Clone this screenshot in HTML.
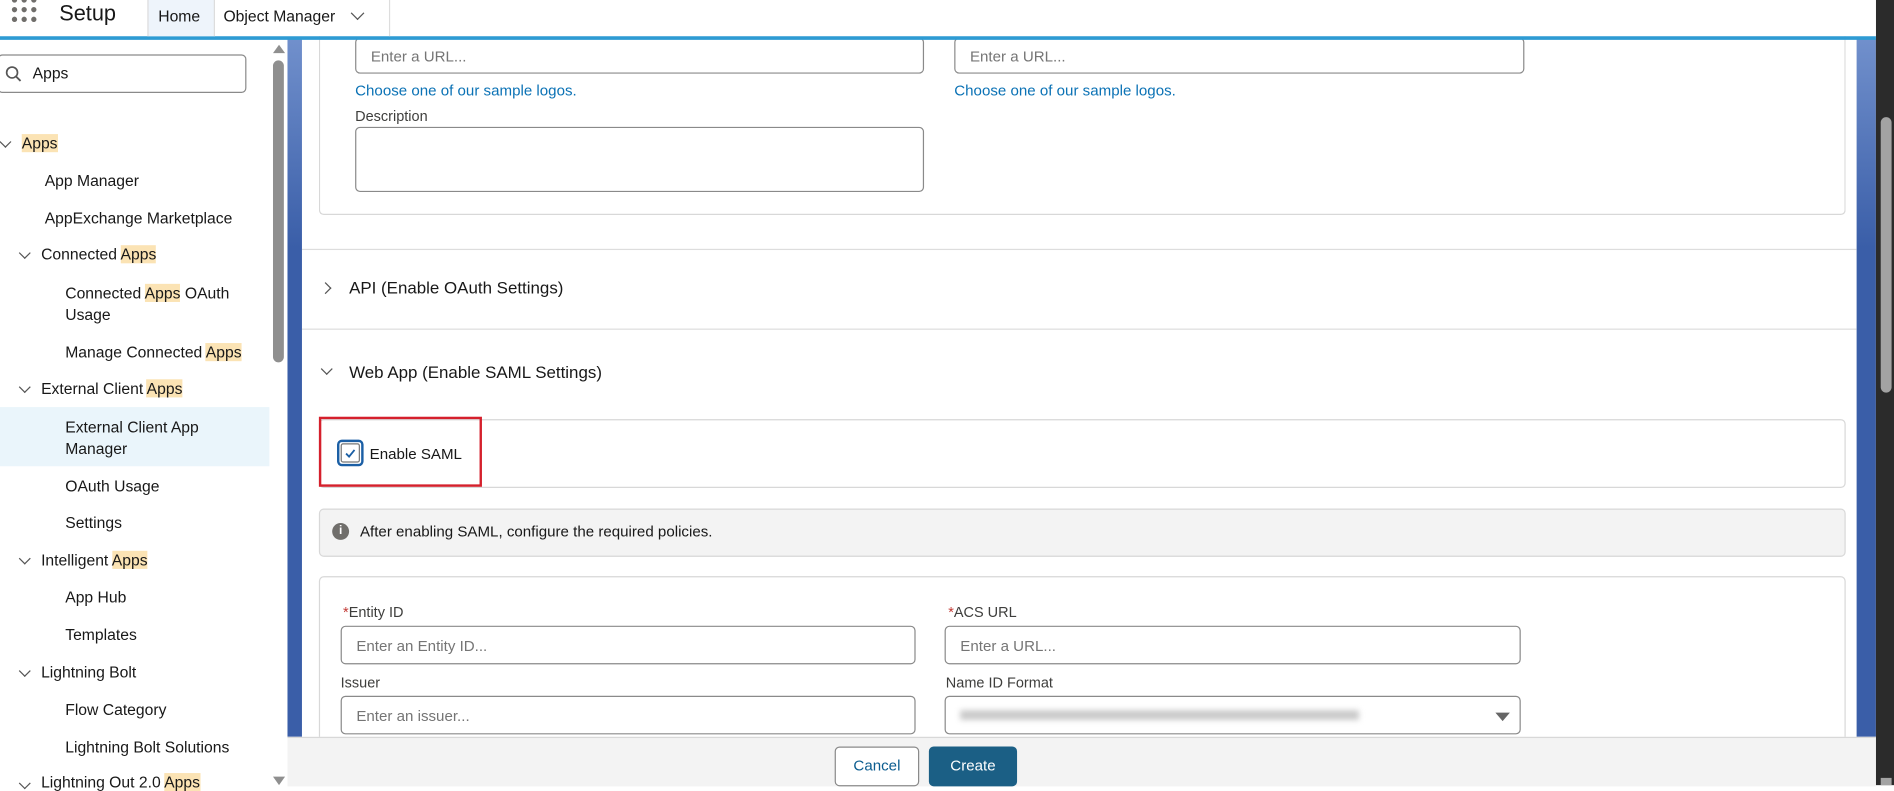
<!DOCTYPE html>
<html><head><meta charset="utf-8"><style>
html,body{margin:0;padding:0;width:1894px;height:785px;overflow:hidden;background:#fff}
#c{position:absolute;left:0;top:0;width:1568px;height:650px;transform:scale(1.20791);transform-origin:0 0;font-family:"Liberation Sans",sans-serif;color:#181818;font-size:12.5px}
.a{position:absolute}
.t{position:absolute;white-space:nowrap}
.hl{background:#fbe3b4}
.inp{position:absolute;border:1px solid #8a8a8a;border-radius:4px;background:#fff;box-sizing:border-box;color:#757575;font-size:12.5px;padding-left:12px;line-height:30px}
.lbl{position:absolute;font-size:12px;color:#3e3e3c;white-space:nowrap}
.card{position:absolute;border:1px solid #d8d8d8;border-radius:4px;background:#fff;box-sizing:border-box}
.side{font-size:13px;color:#181818}
.chev{position:absolute;width:6px;height:6px;border-right:1.3px solid #555;border-bottom:1.3px solid #555;transform:rotate(45deg)}
</style></head><body><div id="c">
<!-- sidebar -->
<div class="a" style="left:0;top:33px;width:238px;height:617px;background:#fff"></div>
<div class="a" style="left:226px;top:50px;width:9px;height:250px;background:#8f8f8f;border-radius:5px"></div>
<div class="a" style="left:226px;top:37px;width:0;height:0;border-left:5px solid transparent;border-right:5px solid transparent;border-bottom:7px solid #8f8f8f"></div>
<div class="a" style="left:226px;top:643px;width:0;height:0;border-left:5px solid transparent;border-right:5px solid transparent;border-top:7px solid #8f8f8f"></div>
<div class="a" style="left:-2px;top:45px;width:206px;height:32px;border:1px solid #8a8a8a;border-radius:4px;box-sizing:border-box"></div>
<svg class="a" style="left:4px;top:54px" width="14" height="14"><circle cx="6" cy="6" r="4.5" fill="none" stroke="#555" stroke-width="1.4"/><path d="M9.3 9.3L13 13" stroke="#555" stroke-width="1.5"/></svg>
<div class="t side" style="left:27px;top:53px">Apps</div>
<div class="a" style="left:0;top:337px;width:223px;height:49px;background:#eaf5fb"></div>
<div class="chev" style="left:1px;top:114px"></div>
<div class="t side" style="left:18px;top:111px"><span class="hl">Apps</span></div>
<div class="t side" style="left:37px;top:142px">App Manager</div>
<div class="t side" style="left:37px;top:173px">AppExchange Marketplace</div>
<div class="chev" style="left:17px;top:206px"></div>
<div class="t side" style="left:34px;top:203px">Connected <span class="hl">Apps</span></div>
<div class="t side" style="left:54px;top:235px">Connected <span class="hl">Apps</span> OAuth</div>
<div class="t side" style="left:54px;top:253px">Usage</div>
<div class="t side" style="left:54px;top:284px">Manage Connected <span class="hl">Apps</span></div>
<div class="chev" style="left:17px;top:317px"></div>
<div class="t side" style="left:34px;top:314px">External Client <span class="hl">Apps</span></div>
<div class="t side" style="left:54px;top:346px">External Client App</div>
<div class="t side" style="left:54px;top:364px">Manager</div>
<div class="t side" style="left:54px;top:395px">OAuth Usage</div>
<div class="t side" style="left:54px;top:425px">Settings</div>
<div class="chev" style="left:17px;top:459px"></div>
<div class="t side" style="left:34px;top:456px">Intelligent <span class="hl">Apps</span></div>
<div class="t side" style="left:54px;top:487px">App Hub</div>
<div class="t side" style="left:54px;top:518px">Templates</div>
<div class="chev" style="left:17px;top:552px"></div>
<div class="t side" style="left:34px;top:549px">Lightning Bolt</div>
<div class="t side" style="left:54px;top:580px">Flow Category</div>
<div class="t side" style="left:54px;top:611px">Lightning Bolt Solutions</div>
<div class="chev" style="left:17px;top:645px"></div>
<div class="t side" style="left:34px;top:640px">Lightning Out 2.0 <span class="hl">Apps</span></div>
<!-- blue bands -->
<div class="a" style="left:238px;top:32px;width:12px;height:578px;background:linear-gradient(#7190cc,#3a5ea8 30%,#3a5ea8)"></div>
<div class="a" style="left:1537px;top:32px;width:16px;height:578px;background:linear-gradient(#7190cc,#3a5ea8 30%,#3a5ea8)"></div>
<div class="a" style="left:1553px;top:0;width:15px;height:650px;background:#2b2b2b"></div>
<div class="a" style="left:1557px;top:97px;width:9px;height:228px;background:#a3a3a3;border-radius:5px"></div>
<div class="a" style="left:1557px;top:644px;width:9px;height:6px;background:#a3a3a3"></div>
<!-- main -->
<div class="a" style="left:250px;top:32px;width:1287px;height:578px;background:#fff"></div>
<div class="card" style="left:264px;top:20px;width:1264px;height:158px;border-top:none"></div>
<div class="inp" style="left:294px;top:31px;width:471px;height:30px">Enter a URL...</div>
<div class="inp" style="left:790px;top:31px;width:472px;height:30px">Enter a URL...</div>
<div class="t" style="left:294px;top:68px;color:#0b72b5;font-size:12.5px">Choose one of our sample logos.</div>
<div class="t" style="left:790px;top:68px;color:#0b72b5;font-size:12.5px">Choose one of our sample logos.</div>
<div class="lbl" style="left:294px;top:89px">Description</div>
<div class="inp" style="left:294px;top:105px;width:471px;height:54px"></div>
<div class="a" style="left:250px;top:206px;width:1287px;height:1px;background:#ddd"></div>
<div class="chev" style="left:266px;top:235px;transform:rotate(-45deg)"></div>
<div class="t" style="left:289px;top:230px;font-size:14px">API (Enable OAuth Settings)</div>
<div class="a" style="left:250px;top:272px;width:1287px;height:1px;background:#ddd"></div>
<div class="chev" style="left:267px;top:302px"></div>
<div class="t" style="left:289px;top:300px;font-size:14px">Web App (Enable SAML Settings)</div>
<div class="card" style="left:264px;top:347px;width:1264px;height:57px"></div>
<div class="a" style="left:264px;top:345px;width:135px;height:58px;border:2px solid #d5202c;box-sizing:border-box"></div>
<div class="a" style="left:279px;top:364px;width:22px;height:22px;border:2px solid #1b5fa5;border-radius:4px;box-sizing:border-box"></div>
<div class="a" style="left:282px;top:367px;width:16px;height:16px;border:1px solid #777;border-radius:2px;box-sizing:border-box"></div>
<svg class="a" style="left:284px;top:369px" width="12" height="12"><path d="M2.5 6.5L5 9L9.5 3.5" fill="none" stroke="#1b5fa5" stroke-width="1.5"/></svg>
<div class="t" style="left:306px;top:369px;font-size:12.5px">Enable SAML</div>
<div class="a" style="left:264px;top:421px;width:1264px;height:40px;background:#f3f3f3;border:1px solid #d8d8d8;border-radius:4px;box-sizing:border-box"></div>
<div class="a" style="left:275px;top:433px;width:14px;height:14px;background:#706e6b;border-radius:50%;color:#fff;font-size:10px;font-weight:bold;text-align:center;line-height:14px">i</div>
<div class="t" style="left:298px;top:433px;font-size:12.5px">After enabling SAML, configure the required policies.</div>
<div class="card" style="left:264px;top:477px;width:1264px;height:150px"></div>
<div class="lbl" style="left:284px;top:500px"><span style="color:#c23934">*</span>Entity ID</div>
<div class="inp" style="left:282px;top:518px;width:476px;height:32px;line-height:32px">Enter an Entity ID...</div>
<div class="lbl" style="left:785px;top:500px"><span style="color:#c23934">*</span>ACS URL</div>
<div class="inp" style="left:782px;top:518px;width:477px;height:32px;line-height:32px">Enter a URL...</div>
<div class="lbl" style="left:282px;top:558px">Issuer</div>
<div class="inp" style="left:282px;top:576px;width:476px;height:32px;line-height:32px">Enter an issuer...</div>
<div class="lbl" style="left:783px;top:558px">Name ID Format</div>
<div class="inp" style="left:782px;top:576px;width:477px;height:32px"></div>
<div class="a" style="left:795px;top:588px;width:330px;height:8px;background:#c9c9c9;filter:blur(2.5px)"></div>
<div class="a" style="left:1238px;top:590px;width:0;height:0;border-left:6px solid transparent;border-right:6px solid transparent;border-top:7px solid #666"></div>
<!-- footer -->
<div class="a" style="left:238px;top:610px;width:1315px;height:40px;background:#f3f3f3;border-top:1px solid #d8d8d8"></div>
<div class="a" style="left:691px;top:618px;width:70px;height:33px;background:#fff;border:1px solid #8a8a8a;border-radius:4px;box-sizing:border-box;color:#0b5c8f;text-align:center;line-height:31px;font-size:12.5px">Cancel</div>
<div class="a" style="left:769px;top:618px;width:73px;height:33px;background:#1b5f85;border-radius:4px;color:#fff;text-align:center;line-height:33px;font-size:12.5px">Create</div>
<!-- header (on top) -->
<div class="a" style="left:0;top:0;width:1553px;height:30px;background:#fff"></div>
<div class="a" style="left:0;top:30px;width:1553px;height:2.5px;background:#2e9bd3"></div>
<svg class="a" style="left:9px;top:-3px" width="24" height="24"><g fill="#706e6b"><circle cx="3" cy="3" r="2.2"/><circle cx="11" cy="3" r="2.2"/><circle cx="19" cy="3" r="2.2"/><circle cx="3" cy="11" r="2.2"/><circle cx="11" cy="11" r="2.2"/><circle cx="19" cy="11" r="2.2"/><circle cx="3" cy="19" r="2.2"/><circle cx="11" cy="19" r="2.2"/><circle cx="19" cy="19" r="2.2"/></g></svg>
<div class="t" style="left:49px;top:1px;font-size:18px;color:#181818">Setup</div>
<div class="a" style="left:122px;top:0;width:54px;height:30px;background:#eef4fb;border-left:1px solid #ddd;border-right:1px solid #ddd"></div>
<div class="t" style="left:131px;top:6px;font-size:13px">Home</div>
<div class="t" style="left:185px;top:6px;font-size:13px">Object Manager</div>
<div class="chev" style="left:292px;top:7px;width:7px;height:7px"></div>
<div class="a" style="left:322px;top:0;width:1px;height:30px;background:#ddd"></div>
</div></body></html>
